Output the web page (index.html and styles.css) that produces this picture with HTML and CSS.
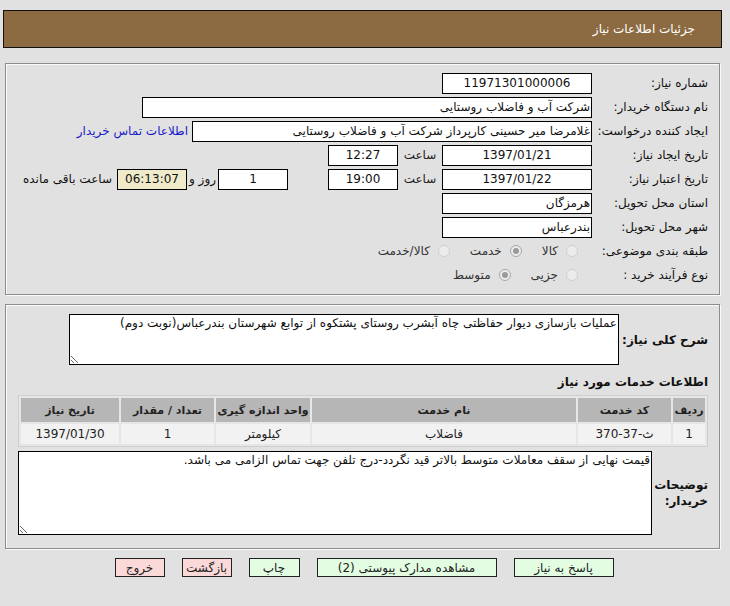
FILE: index.html
```html
<!DOCTYPE html>
<html lang="fa" dir="rtl">
<head>
<meta charset="utf-8">
<title>جزئیات اطلاعات نیاز</title>
<link rel="stylesheet" href="styles.css">
</head>
<body>
<div class="page">
  <div class="header">جزئیات اطلاعات نیاز</div>

  <div class="panel panel-info">
    <div class="row">
      <div class="label">شماره نیاز:</div>
      <div class="box w150 center">11971301000006</div>
    </div>
    <div class="row">
      <div class="label">نام دستگاه خریدار:</div>
      <div class="box w450">شرکت آب و فاضلاب روستایی</div>
    </div>
    <div class="row">
      <div class="label">ایجاد کننده درخواست:</div>
      <div class="box w400">غلامرضا میر حسینی کارپرداز شرکت آب و فاضلاب روستایی</div>
      <a class="link" href="#">اطلاعات تماس خریدار</a>
    </div>
    <div class="row">
      <div class="label">تاریخ ایجاد نیاز:</div>
      <div class="box w150 center">1397/01/21</div>
      <div class="mid">ساعت</div>
      <div class="box w70 center">12:27</div>
    </div>
    <div class="row">
      <div class="label">تاریخ اعتبار نیاز:</div>
      <div class="box w150 center">1397/01/22</div>
      <div class="mid">ساعت</div>
      <div class="box w70 center">19:00</div>
      <div class="box w70 center days">1</div>
      <div class="small">روز و</div>
      <div class="box w70 center remain">06:13:07</div>
      <div class="small tail">ساعت باقی مانده</div>
    </div>
    <div class="row">
      <div class="label">استان محل تحویل:</div>
      <div class="box w150">هرمزگان</div>
    </div>
    <div class="row">
      <div class="label">شهر محل تحویل:</div>
      <div class="box w150">بندرعباس</div>
    </div>
    <div class="row">
      <div class="label">طبقه بندی موضوعی:</div>
      <div class="radios">
        <span class="opt"><span class="radio"></span>کالا</span>
        <span class="opt"><span class="radio on"></span>خدمت</span>
        <span class="opt"><span class="radio"></span>کالا/خدمت</span>
      </div>
    </div>
    <div class="row">
      <div class="label">نوع فرآیند خرید :</div>
      <div class="radios">
        <span class="opt"><span class="radio"></span>جزیی</span>
        <span class="opt"><span class="radio on"></span>متوسط</span>
      </div>
    </div>
  </div>

  <div class="panel panel-desc">
    <div class="desc-row">
      <div class="desc-label">شرح کلی نیاز:</div>
      <textarea class="area area1" readonly>عملیات بازسازی دیوار حفاظتی چاه آبشرب روستای پشتکوه از توابع شهرستان بندرعباس(نوبت دوم)</textarea>
    </div>
    <div class="section-title">اطلاعات خدمات مورد نیاز</div>
    <table class="grid">
      <thead>
        <tr>
          <th class="c1">ردیف</th>
          <th class="c2">کد خدمت</th>
          <th class="c3">نام خدمت</th>
          <th class="c4">واحد اندازه گیری</th>
          <th class="c5">تعداد / مقدار</th>
          <th class="c6">تاریخ نیاز</th>
        </tr>
      </thead>
      <tbody>
        <tr>
          <td>1</td>
          <td>ث-37-370</td>
          <td>فاضلاب</td>
          <td>کیلومتر</td>
          <td>1</td>
          <td>1397/01/30</td>
        </tr>
      </tbody>
    </table>
    <div class="notes-row">
      <div class="notes-label">توضیحات<br>خریدار:</div>
      <textarea class="area area2" readonly>قیمت نهایی از سقف معاملات متوسط بالاتر قید نگردد-درج تلفن جهت تماس الزامی می باشد.</textarea>
    </div>
  </div>

  <div class="buttons">
    <button class="btn green b-reply">پاسخ به نیاز</button>
    <button class="btn green b-docs">مشاهده مدارک پیوستی (2)</button>
    <button class="btn green b-print">چاپ</button>
    <button class="btn red b-back">بازگشت</button>
    <button class="btn red b-exit">خروج</button>
  </div>
</div>
</body>
</html>
```

FILE: styles.css
```css
* { box-sizing: border-box; }

html, body {
  margin: 0;
  padding: 0;
  background: #e1e1e1;
}

body {
  direction: rtl;
  font-family: Tahoma, "DejaVu Sans", sans-serif;
  font-size: 11px;
  color: #111;
}

.page {
  padding: 10px 8px 0 3px;
}

.header {
  height: 38px;
  background: #8c6b42;
  border: 1px solid #111;
  color: #fff;
  font-size: 12px;
  padding-right: 26px;
  display: flex;
  align-items: center;
}

.panel {
  margin: 0 2px 0 2px;
  border: 1px solid #8d8d8d;
  box-shadow: inset 1px 1px 0 #fafafa, 1px 1px 0 #fafafa;
  background: #e1e1e1;
}

.panel-info {
  margin-top: 15px;
  height: 232px;
  padding: 7px 11px 0 0;
}

.row {
  height: 24px;
  display: flex;
  align-items: center;
}

.label {
  width: 116px;
  flex: none;
  white-space: nowrap;
  font-size: 12px;
}

.box {
  height: 21px;
  background: #fff;
  border: 1px solid #000;
  padding: 0 1px;
  display: flex;
  align-items: center;
  white-space: nowrap;
  overflow: hidden;
  font-size: 12px;
  flex: none;
}

.center { justify-content: center; }
.w150 { width: 150px; }
.w450 { width: 450px; }
.w400 { width: 400px; }
.w70 { width: 70px; }

.link {
  color: #1a1acc;
  text-decoration: none;
  margin-right: 4px;
  font-size: 12px;
  white-space: nowrap;
}

.mid {
  width: 44px;
  text-align: center;
  font-size: 12px;
  color: #222;
}

.days { margin-right: 40px; }

.small {
  width: 31px;
  text-align: center;
  font-size: 12px;
  white-space: nowrap;
}

.remain { background: #efebca; }

.tail {
  width: auto;
  margin-right: 5px;
}

.radios {
  display: flex;
  align-items: center;
  padding-right: 14px;
  font-size: 12px;
  color: #333;
}

.opt {
  display: inline-flex;
  align-items: center;
  margin-left: 20px;
  white-space: nowrap;
}

.radio {
  width: 12px;
  height: 12px;
  border-radius: 50%;
  border: 1px solid #cfcfcf;
  background: #ececec;
  margin-left: 8px;
  position: relative;
  flex: none;
}

.radio.on {
  border-color: #a8a8a8;
}

.radio.on::after {
  content: "";
  position: absolute;
  left: 2px;
  top: 2px;
  width: 6px;
  height: 6px;
  border-radius: 50%;
  background: #9a9a9a;
}

.panel-desc {
  margin-top: 9px;
  height: 245px;
  padding: 9px 11px 0 12px;
}

.desc-row {
  display: flex;
  align-items: center;
}

.desc-label {
  width: 89px;
  flex: none;
  font-weight: bold;
  font-size: 12px;
  white-space: nowrap;
}

.area {
  display: block;
  border: 1px solid #000;
  background: #fff;
  font-family: Tahoma, "DejaVu Sans", sans-serif;
  font-size: 12px;
  color: #111;
  padding: 1px 1px;
  margin: 0;
  resize: both;
  direction: rtl;
  outline: none;
}

.area1 {
  width: 550px;
  height: 51px;
}

.section-title {
  font-weight: bold;
  font-size: 12px;
  margin-top: 10px;
  height: 20px;
  line-height: 14px;
}

.grid {
  width: 690px;
  margin-right: 0;
  border: 1px solid #cfcfcf;
  border-spacing: 2px;
  background: #e6e6e6;
  font-size: 12px;
  table-layout: fixed;
}

.grid th {
  background: #b6b6b6;
  height: 24px;
  font-weight: bold;
  font-size: 11px;
  color: #222;
  padding: 0;
  white-space: nowrap;
}

.grid td {
  background: #f2f2f2;
  height: 20px;
  text-align: center;
  padding: 0;
  color: #222;
  white-space: nowrap;
}

.c1 { width: 32px; }
.c2 { width: 93px; }
.c4 { width: 94px; }
.c5 { width: 93px; }
.c6 { width: 98px; }

.notes-row {
  display: flex;
  align-items: center;
  margin-top: 4px;
}

.notes-label {
  width: 56px;
  flex: none;
  font-weight: bold;
  font-size: 12px;
  line-height: 16px;
}

.area2 {
  width: 636px;
  height: 84px;
}

.buttons {
  display: flex;
  justify-content: center;
  gap: 17px;
  margin-top: 9px;
  padding-left: 3px;
}

.btn {
  height: 19px;
  border: 1px solid #222;
  font-family: Tahoma, "DejaVu Sans", sans-serif;
  font-size: 12px;
  color: #222;
  padding: 2px 0 0 0;
  line-height: 15px;
  cursor: pointer;
}

.green { background: #e3fde3; }
.red { background: #fcd9d9; }

.b-reply { width: 100px; }
.b-docs { width: 180px; }
.b-print { width: 51px; }
.b-back { width: 50px; }
.b-exit { width: 50px; }
```
